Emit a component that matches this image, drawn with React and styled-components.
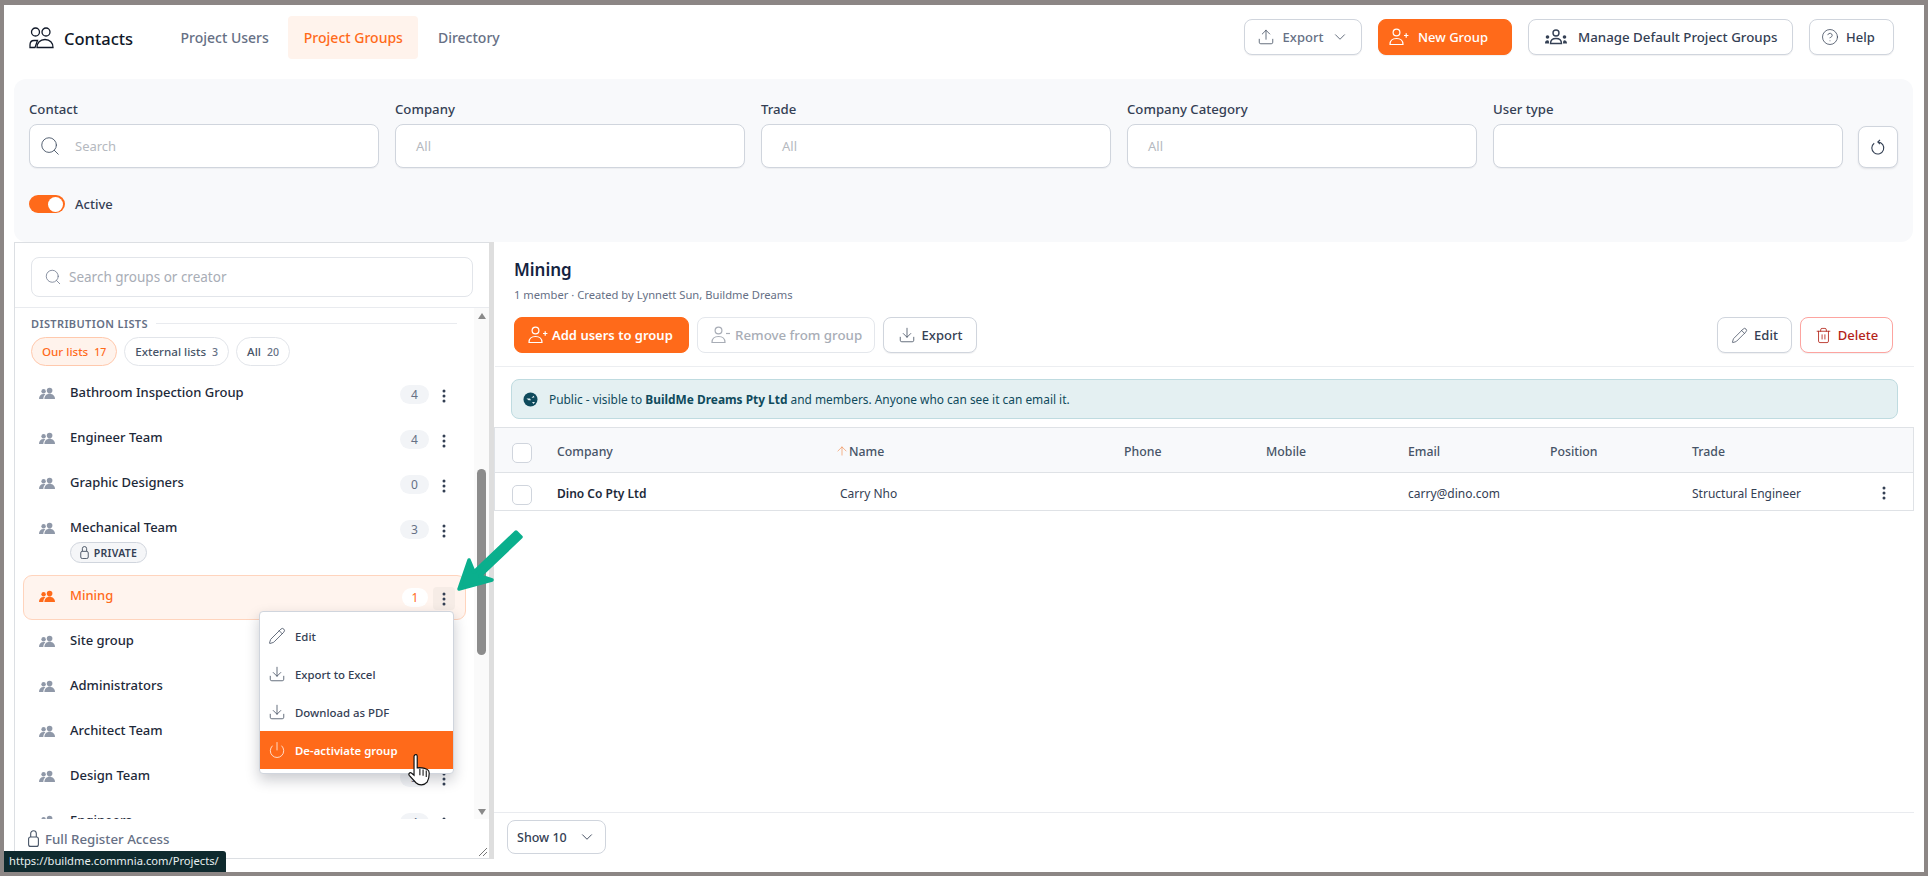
import React from 'react';
import styled, { createGlobalStyle } from 'styled-components';
import { Upload, Download, ChevronDown, CircleHelp, Search, Pencil, Trash2, Power, ArrowUp } from 'lucide-react';

const Global = createGlobalStyle`
  html, body { margin: 0; padding: 0; height: 876px; overflow: hidden; }
  body { background: #8c8685; font-family: "Noto Sans", "Open Sans", sans-serif; color: #1d2939; }
  * { box-sizing: border-box; }
`;

const Frame = styled.div`
  position: relative; margin: 5px 0 0 4px; width: 1920px; height: 867px; background: #fff;
  display: flex; flex-direction: column; overflow: hidden;
`;
const Header = styled.header`
  display: flex; align-items: center; height: 74px; padding: 0 30px 10px 25px; flex: none;
`;
const Brand = styled.div`
  display: flex; align-items: center; gap: 10px; width: 136px; padding-top: 2px; font-size: 16.5px; font-weight: 500; color: #101828;
`;
const Tabs = styled.nav`display: flex; gap: 4px;`;
const Tab = styled.div`
  height: 43px; padding: 0 15.5px; display: flex; align-items: center; font-size: 14px; font-weight: 500; border-radius: 4px;
  color: ${p => (p.$active ? '#ff6a1a' : '#667085')};
  background: ${p => (p.$active ? '#fff3ec' : 'transparent')};
`;
const HeaderActions = styled.div`margin-left: auto; display: flex; gap: 16px;`;
const Btn = styled.button`
  height: 36px; padding: 0 0 0 ${p => p.$pl ?? 0}px; display: inline-flex; align-items: center; justify-content: ${p => (p.$pl !== undefined ? 'flex-start' : 'center')}; gap: ${p => p.$gap ?? 6}px;
  font-family: inherit; font-size: ${p => p.$fs ?? 13}px; font-weight: ${p => p.$weight ?? 500}; border-radius: 8px; white-space: nowrap;
  width: ${p => p.$w}px; flex: none;
  border: 1px solid ${p => p.$border || '#d0d5dd'};
  background: ${p => p.$bg || '#fff'};
  color: ${p => p.$color || '#344054'};
  box-shadow: ${p => (p.$flat ? 'none' : '0 1px 1px rgba(16,24,40,.06)')};
`;

const Filters = styled.section`
  flex: none; margin: 0 11px 0 10px; height: 163px; padding: 20px 15px 0; background: #f8f9fb; border-radius: 12px;
`;
const FilterRow = styled.div`display: flex; align-items: flex-end; gap: 16px;`;
const Field = styled.div`width: 350px; display: flex; flex-direction: column; gap: 5px;`;
const Label = styled.label`height: 20px; line-height: 20px; font-size: 13.2px; font-weight: 500; color: #344054;`;
const InputBox = styled.div`
  height: 44px; background: #fff; border: 1px solid #d0d5dd; border-radius: 8px; display: flex; align-items: center;
  padding: 0 ${p => (p.$search ? 9 : 20)}px; gap: 14px; font-size: 13px; color: #b5b9c0;
  box-shadow: 0 1px 1px rgba(16,24,40,.05);
`;
const ResetBtn = styled.button`
  width: 40px; height: 42px; margin-left: -1px; background: #fff; border: 1px solid #d0d5dd; border-radius: 8px; display: flex; align-items: center; justify-content: center; padding: 0;
  box-shadow: 0 1px 2px rgba(16,24,40,.1);
`;
const ToggleRow = styled.div`display: flex; align-items: center; gap: 10px; margin-top: 27px; font-size: 13px; font-weight: 500; color: #344054;`;
const Toggle = styled.span`
  width: 36px; height: 18px; background: #ff6a1a; border-radius: 9px; display: flex; justify-content: flex-end; align-items: center; padding-right: 2px;
  &::after { content: ''; width: 15px; height: 15px; background: #fff; border-radius: 50%; }
`;

const Main = styled.main`flex: none; height: 617px; margin-left: 10px; display: flex;`;
const Side = styled.aside`
  position: relative; width: 475px; border: 1px solid #dcdfe3; border-right: 0; display: flex; flex-direction: column; flex: none;
`;
const SideSearch = styled.div`flex: none; padding: 14px 16px 10px; border-bottom: 1px solid #e9ebef;`;
const SearchBox = styled.div`
  height: 40px; border: 1px solid #e2e5ea; border-radius: 8px; display: flex; align-items: center; gap: 7px; padding: 0 12px; font-size: 13.5px; color: #a8adb6;
`;
const ScrollWrap = styled.div`flex: 1; min-height: 0; display: flex;`;
const ListArea = styled.div`flex: 1; min-width: 0; overflow: hidden;`;
const SectionHead = styled.div`
  display: flex; align-items: center; gap: 8px; height: 29px; padding: 1px 0 0 16px; font-size: 11px; font-weight: 600; letter-spacing: .38px; color: #667085;
  &::after { content: ''; width: 301px; height: 1px; background: #e9ebef; }
`;
const Pills = styled.div`display: flex; gap: 7px; padding-left: 16px; height: 35px;`;
const Pill = styled.div`
  height: 29px; padding: 0 10px; display: flex; align-items: center; gap: 6px; border-radius: 15px; font-size: 11.6px; font-weight: 500;
  border: 1px solid ${p => (p.$active ? '#ffc9ad' : '#e2e5ea')};
  background: ${p => (p.$active ? '#fff3ec' : '#fff')};
  color: ${p => (p.$active ? '#ff6a1a' : '#475467')};
  small { font-size: 10.5px; color: ${p => (p.$active ? '#ff6a1a' : '#667085')}; }
`;
const Row = styled.div`
  position: relative; width: 443px; margin-left: 8px; min-height: ${p => (p.$tall ? 68 : 45)}px; padding: 9px 10px 0 15px; display: flex; align-items: flex-start;
  border: 1px solid ${p => (p.$active ? '#ffd4bd' : 'transparent')}; border-radius: 9px;
  background: ${p => (p.$active ? '#fff4ee' : 'transparent')};
`;
const RowIcon = styled.span`flex: none; width: 16px; height: 16px; margin-top: 4px; color: ${p => (p.$active ? '#ff6a1a' : '#8f98a8')}; display: flex;`;
const RowBody = styled.div`flex: 1; min-width: 0; padding-left: 15px;`;
const RowName = styled.div`line-height: 20px; font-size: 13px; font-weight: 500; color: ${p => (p.$active ? '#ff6a1a' : '#1d2939')};`;
const PrivateTag = styled.div`
  margin-top: 5px; width: 77px; height: 21px; border: 1px solid #d0d5dd; border-radius: 11px; background: #f5f6f8; display: flex; align-items: center; justify-content: center; gap: 5px;
  font-size: 10.5px; font-weight: 600; letter-spacing: .3px; color: #344054;
`;
const Count = styled.span`
  flex: none; width: ${p => (p.$active ? 26 : 29)}px; height: 19px; margin: 3px ${p => (p.$active ? 5 : 4)}px 0 0; border-radius: 10px; display: flex; align-items: center; justify-content: center; font-size: 12px;
  background: ${p => (p.$active ? '#fff' : '#f2f4f7')}; color: ${p => (p.$active ? '#ff6a1a' : '#667085')};
`;
const Dots = styled.span`
  flex: none; width: 22px; height: 23px; margin-top: 2px; border-radius: 4px; display: flex; align-items: center; justify-content: center; color: #344054;
  background: ${p => (p.$active ? '#f6ece6' : 'transparent')};
`;
const Track = styled.div`flex: none; width: 15px; background: #fafafa; display: flex; flex-direction: column; align-items: center; padding-top: 5px;`;
const ArrowMark = styled.span`
  width: 0; height: 0; border-left: 4.5px solid transparent; border-right: 4.5px solid transparent;
  ${p => (p.$down ? 'border-top: 6px solid #8a8a8a; margin-top: 154px;' : 'border-bottom: 6px solid #8a8a8a;')}
`;
const Thumb = styled.span`width: 9px; height: 186px; margin-top: 150px; border-radius: 5px; background: #8c8c8c; flex: none;`;
const SideFooter = styled.div`
  flex: none; position: relative; height: 39px; display: flex; align-items: center; gap: 6px; padding-left: 13px; font-size: 13.3px; font-weight: 500; color: #667085;
`;
const Resize = styled.svg`position: absolute; right: 1px; bottom: 1px;`;
const Divider = styled.div`flex: none; width: 5px; background: #dedede;`;

const Content = styled.div`flex: none; width: 1420px; display: flex; flex-direction: column;`;
const ContentHead = styled.div`padding: 16px 21px 13px 19px; border-bottom: 1px solid #eceef1; margin-left: 1px;`;
const Title = styled.h1`margin: 0; font-size: 17px; line-height: 24px; font-weight: 600; color: #14233f;`;
const Sub = styled.div`margin-top: 4px; font-size: 11.2px; line-height: 18px; color: #667085;`;
const ActionBar = styled.div`display: flex; gap: 8px; margin-top: 13px;`;
const Spacer = styled.div`flex: 1;`;
const Banner = styled.div`
  margin: 12px 16px 8px 17px; height: 40px; border: 1px solid #bfdbe0; border-radius: 8px; background: #e4f0f2; display: flex; align-items: center; gap: 11px; padding: 0 11px;
  font-size: 11.9px; color: #0f4a5c; b { font-weight: 700; }
`;
const TRow = styled.div`
  display: grid; grid-template-columns: 62px 283px 284px 142px 142px 142px 142px 190px 1fr; align-items: center; width: 1420px; padding-top: ${p => (p.$head ? 2 : 3)}px;
  height: ${p => (p.$head ? 46 : 38)}px;
  border: 1px solid #dfe2e6; border-top-width: ${p => (p.$head ? 1 : 0)}px;
  background: ${p => (p.$head ? '#f8f9fb' : '#fff')};
  font-size: ${p => (p.$head ? 12.3 : 12)}px; color: ${p => (p.$head ? '#475467' : '#344054')};
  font-weight: ${p => (p.$head ? 500 : 400)};
`;
const Check = styled.span`display: block; margin: 3px 0 0 17px; width: 20px; height: 20px; background: #fff; border: 1px solid #d0d5dd; border-radius: 5px;`;
const SortName = styled.span`display: flex; align-items: center;`;
const Strong = styled.span`font-weight: 600; color: #1d2939;`;
const Dot3 = styled.span`display: flex; color: #344054;`;
const ContentFill = styled.div`flex: 1;`;
const ContentFoot = styled.div`flex: none; height: 47px; padding: 7px 13px; border-top: 1px solid #e9ebef;`;
const ShowSelect = styled.div`
  width: 99px; height: 34px; border: 1px solid #d0d5dd; border-radius: 8px; display: flex; align-items: center; justify-content: space-between; padding: 0 9px; font-size: 12.5px; font-weight: 500; color: #344054;
`;

const Menu = styled.div`
  position: absolute; left: 255px; top: 606px; width: 195px; height: 163px; padding: 5px 0 6px; background: #fff; border: 1px solid #d0d5dd; border-radius: 4px; box-shadow: 0 6px 14px rgba(16,24,40,.22);
  display: flex; flex-direction: column; z-index: 3;
`;
const MenuItem = styled.div`
  height: 38px; flex: none; display: flex; align-items: center; gap: 9px; padding-left: 8px; font-size: 11.4px; font-weight: ${p => (p.$danger ? 600 : 500)};
  background: ${p => (p.$danger ? '#ff6a1a' : 'transparent')}; color: ${p => (p.$danger ? '#fff' : '#344054')};
`;
const Pointer = styled.svg`position: absolute; left: 404px; top: 748px; z-index: 4;`;
const Callout = styled.svg`position: absolute; left: 450px; top: 520px; z-index: 4;`;
const StatusTip = styled.div`
  position: absolute; left: 0; bottom: 0; width: 222px; height: 21px; background: #0f2a2e; color: #e8f0f0; border-radius: 0 3px 0 0; font-size: 11.2px; line-height: 20px; padding-left: 5px; z-index: 5; white-space: nowrap;
`;

const People = ({ size = 16 }) => (
  <svg width={size} height={size} viewBox="0 0 16 16" fill="currentColor">
    <circle cx="4.6" cy="5.2" r="2.2" /><circle cx="10.6" cy="4.6" r="2.8" />
    <path d="M0 13c0-3 1.6-5 4.6-5 .7 0 1.3.1 1.8.3C5 9.3 4.4 11 4.3 13H0z" />
    <path d="M5.4 13c.1-3 2-5.2 5.2-5.2S15.9 10 16 13H5.4z" />
  </svg>
);
const ContactsIcon = () => (
  <svg width="25" height="22" viewBox="0 0 25 22" fill="none" stroke="#101828" strokeWidth="1.3">
    <circle cx="6.5" cy="5" r="4" /><circle cx="17" cy="5" r="4" />
    <path d="M1 20.5v-2.5c0-2.5 1.5-4.5 4-4.5h3.5L6 20.5z" />
    <path d="M8 20.5c0-4.5 3-8 8-8s8 3.5 8 8z" />
  </svg>
);
const UserPlusIcon = ({ color = '#fff', minus }) => (
  <svg width="20" height="18" viewBox="0 0 20 18" fill="none" stroke={color} strokeWidth="1.2">
    <circle cx="7.5" cy="4.5" r="3.4" />
    <path d="M1 16.5c0-3.8 2.7-6 6.5-6s6.5 2.2 6.5 6z" />
    <path d={minus ? 'M15 7.5h4' : 'M15 7.5h4.4M17.2 5.3v4.4'} />
  </svg>
);
const GroupIcon = () => (
  <svg width="24" height="16" viewBox="0 0 24 16" fill="#344054">
    <circle cx="12" cy="4" r="3" fill="none" stroke="#344054" strokeWidth="1.4" />
    <path d="M6.5 14.5c0-3.4 2.2-5 5.5-5s5.5 1.6 5.5 5z" fill="none" stroke="#344054" strokeWidth="1.4" />
    <circle cx="3.5" cy="8" r="1.8" /><circle cx="20.5" cy="8" r="1.8" />
    <path d="M1 14.5c0-2 1-3.2 2.5-3.2S5 12 5 14.5zM19 14.5c0-2.5.5-3.2 1.5-3.2s2.5 1.2 2.5 3.2z" />
  </svg>
);
const ResetIcon = () => (
  <svg width="16" height="20" viewBox="0 0 16 20" fill="none" stroke="#344054" strokeWidth="1.1">
    <path d="M4.2 6.2a6 6 0 1 0 3.800-1.200" /><path d="M10 2.800 7.800 5l2.200 2.200" />
  </svg>
);
const GlobeIcon = () => (
  <svg width="15" height="15" viewBox="0 0 15 15">
    <circle cx="7.5" cy="7.5" r="7" fill="#0f4a5c" />
    <path d="M3.5 6.5H7l1 1.8H5.5zM8.5 6l2-2.200 1 1.500zM9 10h3l-1.500 2z" fill="#e4f0f2" />
  </svg>
);
const LockIcon = ({ w = 11, h = 17, color = 'currentColor' }) => (
  <svg width={w} height={h} viewBox="0 0 11 17" fill="none" stroke={color} strokeWidth="1.1">
    <rect x=".6" y="7" width="9.8" height="9.4" rx="2" />
    <path d="M2.7 7V3.500a2.800 2.800 0 0 1 5.600 0V7" />
  </svg>
);
const DotsIcon = ({ h = 14 }) => (
  <svg width="4" height={h} viewBox="0 0 4 14" fill="currentColor">
    <circle cx="2" cy="2" r="1.5" /><circle cx="2" cy="7" r="1.5" /><circle cx="2" cy="12" r="1.5" />
  </svg>
);

const groups = [
  { name: 'Bathroom Inspection Group', n: 4 },
  { name: 'Engineer Team', n: 4 },
  { name: 'Graphic Designers', n: 0 },
  { name: 'Mechanical Team', n: 3, priv: true },
  { name: 'Mining', n: 1, active: true },
  { name: 'Site group', n: 2 },
  { name: 'Administrators', n: 3 },
  { name: 'Architect Team', n: 2 },
  { name: 'Design Team', n: 3 },
  { name: 'Engineers', n: 4 },
];
const filters = ['Company', 'Trade', 'Company Category'];

export default function App() {
  return (
    <>
      <Global />
      <Frame>
        <Header>
          <Brand><ContactsIcon />Contacts</Brand>
          <Tabs>
            <Tab>Project Users</Tab>
            <Tab $active>Project Groups</Tab>
            <Tab>Directory</Tab>
          </Tabs>
          <HeaderActions>
            <Btn $w={118} $gap={8} $color="#667085">
              <Upload size={18} strokeWidth={1} color="#344054" />Export<ChevronDown size={18} strokeWidth={1} color="#344054" />
            </Btn>
            <Btn $w={134} $pl={10} $gap={9} $bg="#ff6a1a" $border="#ff6a1a" $color="#fff"><UserPlusIcon />New Group</Btn>
            <Btn $w={265} $pl={15} $gap={10} $fs={13.3}><GroupIcon />Manage Default Project Groups</Btn>
            <Btn $w={85} $pl={11} $gap={7}><CircleHelp size={18} strokeWidth={1} />Help</Btn>
          </HeaderActions>
        </Header>

        <Filters>
          <FilterRow>
            <Field>
              <Label>Contact</Label>
              <InputBox $search><Search size={22} strokeWidth={1} color="#475467" />Search</InputBox>
            </Field>
            {filters.map(f => (
              <Field key={f}><Label>{f}</Label><InputBox>All</InputBox></Field>
            ))}
            <Field><Label>User type</Label><InputBox /></Field>
            <ResetBtn><ResetIcon /></ResetBtn>
          </FilterRow>
          <ToggleRow><Toggle />Active</ToggleRow>
        </Filters>

        <Main>
          <Side>
            <SideSearch>
              <SearchBox><Search size={18} strokeWidth={1} color="#667085" />Search groups or creator</SearchBox>
            </SideSearch>
            <ScrollWrap>
              <ListArea>
                <SectionHead>DISTRIBUTION LISTS</SectionHead>
                <Pills>
                  <Pill $active>Our lists <small>17</small></Pill>
                  <Pill>External lists <small>3</small></Pill>
                  <Pill>All <small>20</small></Pill>
                </Pills>
                {groups.map(g => (
                  <Row key={g.name} $active={g.active} $tall={g.priv}>
                    <RowIcon $active={g.active}><People /></RowIcon>
                    <RowBody>
                      <RowName $active={g.active}>{g.name}</RowName>
                      {g.priv && <PrivateTag><LockIcon w={9} h={13} />PRIVATE</PrivateTag>}
                    </RowBody>
                    <Count $active={g.active}>{g.n}</Count>
                    <Dots $active={g.active}><DotsIcon /></Dots>
                  </Row>
                ))}
              </ListArea>
              <Track>
                <ArrowMark />
                <Thumb />
                <ArrowMark $down />
              </Track>
            </ScrollWrap>
            <SideFooter>
              <LockIcon color="#475467" />Full Register Access
              <Resize width="10" height="10" viewBox="0 0 10 10" stroke="#777" strokeWidth="1"><path d="M1 9 9 1M5 9l4-4" /></Resize>
            </SideFooter>
          </Side>
          <Divider />
          <Content>
            <ContentHead>
              <Title>Mining</Title>
              <Sub>1 member · Created by Lynnett Sun, Buildme Dreams</Sub>
              <ActionBar>
                <Btn $w={175} $pl={13} $gap={4} $flat $weight={600} $bg="#ff6a1a" $border="#ff6a1a" $color="#fff"><UserPlusIcon />Add users to group</Btn>
                <Btn $w={178} $pl={13} $gap={4} $flat $fs={13.3} $border="#e4e7ec" $color="#a8adb6"><UserPlusIcon color="#a8adb6" minus />Remove from group</Btn>
                <Btn $w={94} $gap={6}><Download size={18} strokeWidth={1} />Export</Btn>
                <Spacer />
                <Btn $w={75} $gap={6}><Pencil size={17} strokeWidth={1} />Edit</Btn>
                <Btn $w={93} $gap={6} $border="#fda4a0" $color="#b42318"><Trash2 size={17} strokeWidth={1.2} />Delete</Btn>
              </ActionBar>
            </ContentHead>
            <Banner>
              <GlobeIcon />
              <span>Public - visible to <b>BuildMe Dreams Pty Ltd</b> and members. Anyone who can see it can email it.</span>
            </Banner>
            <TRow $head>
              <Check /><span>Company</span>
              <SortName><ArrowUp size={14} strokeWidth={1} color="#f07f3c" style={{ marginLeft: -5 }} />Name</SortName>
              <span>Phone</span><span>Mobile</span><span>Email</span><span>Position</span><span>Trade</span><span />
            </TRow>
            <TRow>
              <Check /><Strong>Dino Co Pty Ltd</Strong><span>Carry Nho</span>
              <span /><span /><span>carry@dino.com</span><span /><span>Structural Engineer</span>
              <Dot3><DotsIcon /></Dot3>
            </TRow>
            <ContentFill />
            <ContentFoot>
              <ShowSelect>Show 10<ChevronDown size={18} strokeWidth={1.2} /></ShowSelect>
            </ContentFoot>
          </Content>
        </Main>

        <Menu>
          <MenuItem><Pencil size={18} strokeWidth={1} />Edit</MenuItem>
          <MenuItem><Download size={18} strokeWidth={1} />Export to Excel</MenuItem>
          <MenuItem><Download size={18} strokeWidth={1} />Download as PDF</MenuItem>
          <MenuItem $danger><Power size={18} strokeWidth={1} />De-activiate group</MenuItem>
        </Menu>
        <Pointer width="28" height="34" viewBox="0 0 26 32">
          <path d="M6 2c1-1 2.500-.5 2.500 1v11l2-.3 2.500.3 2.500.5 2.500 1c1.500.8 1.800 2 1.800 3.500 0 3-.5 6-2 8.500-3 3.500-8 3-10.500.5L1 21c-1-1.500.5-3 2-2.200L5.500 21V3z" fill="#fff" stroke="#111" strokeWidth="1.1" />
          <path d="M11 15v6M14 15.500v6M17 16.500v6" stroke="#111" strokeWidth="1" />
        </Pointer>
        <Callout width="80" height="80" viewBox="0 0 80 80">
          <path d="M5 64 15 35 20 47 62 7 67 12 26 51 38 55Z" fill="#0aaf8d" stroke="#0aaf8d" strokeWidth="3.5" strokeLinejoin="round" />
        </Callout>
        <StatusTip>https://buildme.commnia.com/Projects/</StatusTip>
      </Frame>
    </>
  );
}
